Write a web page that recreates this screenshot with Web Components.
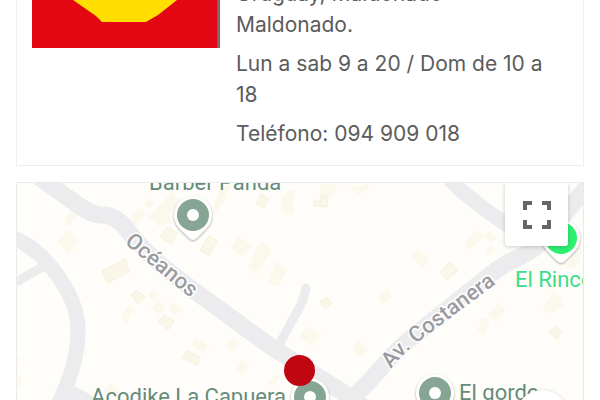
<!DOCTYPE html>
<html lang="es">
<head>
<meta charset="utf-8">
<meta name="viewport" content="width=device-width, initial-scale=1">
<title>Locales</title>
<style>
  html { scrollbar-width: none; }
  body {
    margin: 0;
    background: #fff;
    color: #5c5c5c;
    font-family: Inter, "Open Sans", sans-serif;
    overflow: hidden;
  }
</style>
</head>
<body>
<store-page>
  <store-card>
    <store-logo slot="logo"></store-logo>
    <p>Uruguay, Maldonado<br>Maldonado.</p>
    <p>Lun a sab 9 a 20 / Dom de 10 a 18</p>
    <p>Teléfono: 094 909 018</p>
  </store-card>
  <store-map>
    <map-place x="176" y="32" label="top">Barber Panda</map-place>
    <map-place x="293" y="214" label="left">Acodike La Capuera</map-place>
    <map-place x="418" y="210" label="right">El gordo</map-place>
    <map-place x="544" y="55" label="bottom" kind="bright">El Rincón</map-place>
    <map-control slot="top" label="Pantalla completa">
      <svg width="28" height="28" viewBox="0 0 28 28" fill="none" stroke="#666" stroke-width="4">
        <path d="M2 9V2H9M19 2H26V9M26 19V26H19M9 26H2V19"/>
      </svg>
    </map-control>
    <map-control slot="bottom" label="Controles del mapa" round></map-control>
  </store-map>
</store-page>

<script>
class StorePage extends HTMLElement {
  constructor() {
    super();
    this.attachShadow({ mode: 'open' }).innerHTML = `
    <style>
      :host {
        display: flex;
        flex-direction: column;
        gap: 16px;
        padding: 0 16px 16px;
        margin-top: -39px;
      }
    </style>
    <slot></slot>`;
  }
}
customElements.define('store-page', StorePage);

class StoreCard extends HTMLElement {
  constructor() {
    super();
    this.attachShadow({ mode: 'open' }).innerHTML = `
    <style>
      :host {
        display: grid;
        grid-template-columns: 188px 1fr;
        align-items: start;
        gap: 16px;
        padding: 16px 15px;
        border: 1px solid #eee;
        box-sizing: border-box;
      }
      .info {
        display: flex;
        flex-direction: column;
        gap: 8px;
        padding-right: 16px;
      }
      ::slotted(p) {
        margin: 0;
        font-size: 21px;
        line-height: 31px;
      }
    </style>
    <slot name="logo"></slot>
    <div class="info"><slot></slot></div>`;
  }
}
customElements.define('store-card', StoreCard);

class StoreLogo extends HTMLElement {
  constructor() {
    super();
    this.attachShadow({ mode: 'open' }).innerHTML = `
    <style>
      :host { display: block; }
      svg { display: block; width: 100%; }
    </style>
    <svg viewBox="0 0 188 70" aria-hidden="true">
      <path fill="#e30613" d="M0 0H186V70H0z"/>
      <path fill="#77686b" d="M185 0H188V70H185z"/>
      <path fill="#ffde00" d="M22 0L41 22L64 38L70 44H114L126 37L145 22L164 0z"/>
    </svg>`;
  }
}
customElements.define('store-logo', StoreLogo);

class StoreMap extends HTMLElement {
  constructor() {
    super();
    this.attachShadow({ mode: 'open' }).innerHTML = `
    <style>
      :host {
        display: block;
        position: relative;
        height: 416px;
        border: 1px solid #eaeaea;
        background: #fefdfa;
        overflow: hidden;
        font-family: Roboto, "Liberation Sans", sans-serif;
      }
      .canvas { display: block; width: 100%; height: 100%; }
      .roads { fill: none; stroke: #ececee; stroke-width: 15; stroke-linejoin: round; }
      .houses { fill: #fbf8ec; }
      .outlined { fill: #faf7e9; stroke: #f5f1df; stroke-width: 1; }
      .streets {
        fill: #9c9c9f;
        stroke: #fff;
        stroke-width: 3;
        stroke-linejoin: round;
        paint-order: stroke;
        font-size: 22px;
        font-weight: 500;
      }
      .here {
        position: absolute;
        left: 267px;
        top: 172px;
        width: 31px;
        height: 31px;
        border-radius: 50%;
        background: #c00711;
      }
      .top, .bottom { position: absolute; right: 15px; }
      .top { top: 0; }
      .bottom { top: 207px; }
    </style>
    <svg class="canvas">
      <g transform="translate(-17 -183)">
        <g class="houses">
          <path d="M64 219L74 208L80 213L68 226zM58 241L70 229L79 243L68 254zM130 220L138 208L145 213L137 226zM144 204L149 198L155 203L149 209zM147 216L155 211L172 192L181 200L169 214L171 222L160 227z"/>
          <path d="M213 205L221 188L231 184L226 197L215 215zM281 200L288 190L296 191L292 202L295 209L291 216L282 212zM320 184L337 184L334 196L320 193zM350 188L366 184L371 188L357 195z"/>
          <path d="M231 248L238 236L252 246L243 256zM248 268L257 247L263 242L272 250L257 274zM266 283L276 261L288 270L278 286z"/>
          <path d="M411 258L418 249L430 259L422 268zM464 244L477 230L485 236L470 249zM484 236L490 230L497 238L491 243zM485 251L490 245L496 250L490 256z"/>
          <path d="M488 315L498 303L506 309L497 322zM477 330L483 317L490 320L485 334zM543 309L554 291L561 297L563 306L549 314zM566 269L577 245L583 250L576 266z"/>
          <path d="M299 338L306 326L321 334L313 346zM352 348L358 340L368 349L360 358zM378 297L387 290L392 297L382 304zM226 347L232 338L239 343L234 352zM236 370L242 360L249 366L242 374zM266 383L276 374L280 378L273 386zM200 340L209 346L203 353L196 348z"/>
          <path d="M148 296L152 289L158 294L154 301zM151 308L158 301L166 306L159 315zM168 308L174 302L182 309L175 316zM192 344L196 338L202 344L196 350zM103 390L110 384L119 391L111 397zM121 318L128 305L134 309L126 325zM16 356L20 357L19 364L16 365zM16 378L23 377L20 386L16 387zM106 280L117 276L111 284z"/>
        </g>
        <g class="outlined">
          <path d="M102 271L125 259L129 272L107 283zM160 237L168 226L177 233L171 244zM200 250L209 236L217 241L209 256zM256 204L261 194L269 199L264 208zM314 200L321 202L321 194L328 196L327 207L314 206z"/>
          <path d="M440 272L450 262L458 270L447 280zM131 295L137 290L145 297L138 304zM158 322L164 315L174 321L168 330zM182 358L187 350L200 357L197 365zM320 302L326 297L332 303L325 309zM549 332L555 326L562 332L557 340z"/>
        </g>
        <g class="roads">
          <path stroke-width="17" d="M39 177L78 205Q95 217 106 215Q119 217 132 236C154 262 180 280 200 295L273 348L350 397L375 416"/>
          <path d="M10 236C27 243 40 253 52 268C69 290 78 309 78 330C78 357 70 382 56 408"/>
          <path stroke-width="9" d="M16 282L44 266"/>
          <path stroke-width="9" stroke-linecap="round" d="M306 288Q304 300 298 310L280 343"/>
          <path d="M68 391L94 405"/>
          <path stroke-width="17" d="M352 398C380 373 390 354 410 339L490 275Q503 264 518 258Q534 251 544 239L590 183"/>
          <path d="M449 179Q469 198 487 211L536 245"/>
        </g>
        <g class="streets">
          <path id="oceanos" fill="none" stroke="none" d="M124 243L188 296L220 322"/>
          <path id="costanera" fill="none" stroke="none" d="M391 369Q406 350 430 333L500 281L530 258"/>
          <text><textPath href="#oceanos">Océanos</textPath></text>
          <text><textPath href="#costanera">Av. Costanera</textPath></text>
        </g>
      </g>
    </svg>
    <slot></slot>
    <span class="here"></span>
    <div class="top"><slot name="top"></slot></div>
    <div class="bottom"><slot name="bottom"></slot></div>`;
  }
}
customElements.define('store-map', StoreMap);

class MapPlace extends HTMLElement {
  connectedCallback() {
    this.attachShadow({ mode: 'open' }).innerHTML = `
    <style>
      :host {
        --pin: #86a594;
        --text: #658b79;
        position: absolute;
        left: ${this.getAttribute('x')}px;
        top: ${this.getAttribute('y')}px;
        color: var(--text);
      }
      :host([kind="bright"]) { --pin: #2ef070; --text: #3fdc88; }
      svg {
        position: absolute;
        left: -22px;
        top: -22px;
        filter: drop-shadow(0 1px 1px #0005);
      }
      span {
        position: absolute;
        font-size: 22px;
        line-height: 24px;
        white-space: nowrap;
        text-shadow: 0 0 2px #fff, 0 0 2px #fff;
      }
      :host([label="top"]) span { bottom: 20px; left: -44px; }
      :host([label="left"]) span { right: 24px; top: -12px; }
      :host([label="right"]) span { left: 24px; top: -12px; }
      :host([label="bottom"]) span { left: -46px; top: 30px; }
    </style>
    <svg width="44" height="52" viewBox="0 0 44 52" aria-hidden="true">
      <path fill="#fff" d="M22 3A19 19 0 0 1 36 35L26 45Q22 49 18 45L8 35A19 19 0 0 1 22 3z"/>
      <circle cx="22" cy="22" r="16" fill="var(--pin)"/>
      <circle cx="22" cy="22" r="6" fill="#fff"/>
    </svg>
    <span><slot></slot></span>`;
  }
}
customElements.define('map-place', MapPlace);

class MapControl extends HTMLElement {
  connectedCallback() {
    this.attachShadow({ mode: 'open' }).innerHTML = `
    <style>
      :host { display: block; }
      button {
        display: grid;
        place-items: center;
        width: 63px;
        height: 63px;
        padding: 0;
        border: 0;
        border-radius: 0 0 3px 3px;
        background: #fff;
        box-shadow: 0 1px 4px #0003;
      }
      :host([round]) button { width: 52px; height: 52px; border-radius: 50%; }
    </style>
    <button type="button" aria-label="${this.getAttribute('label')}"><slot></slot></button>`;
  }
}
customElements.define('map-control', MapControl);
</script>
</body>
</html>
